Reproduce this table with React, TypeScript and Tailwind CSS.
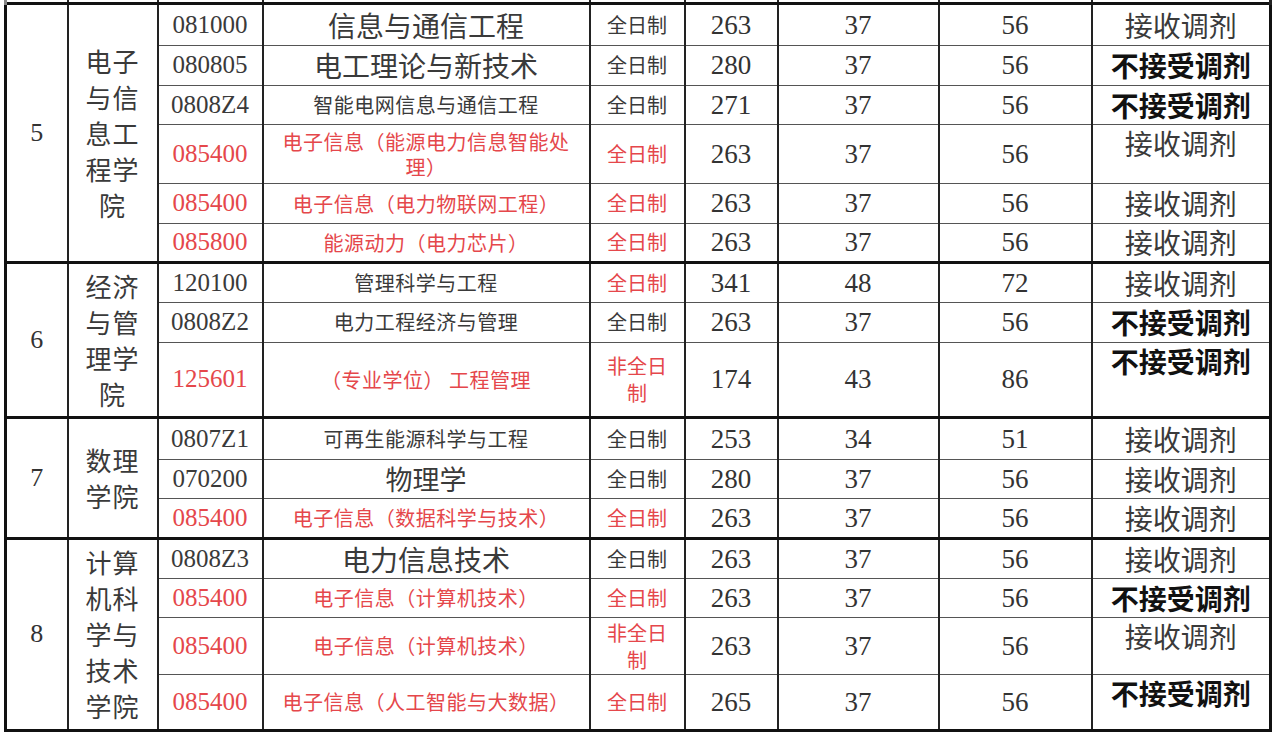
import React from "react";

type Row = {
  h: string;
  code: string;
  codeRed?: boolean;
  name: React.ReactNode;
  nameCls: string;
  type: React.ReactNode;
  typeRed?: boolean;
  typeTall?: boolean;
  statusTop?: boolean;
  score: string;
  a: string;
  b: string;
  ok: boolean;
};

type Section = {
  num: string;
  school: string[];
  rows: Row[];
};

const big = "text-[28px] leading-[30px] text-[#3a3a3a]";
const small = "text-[20px] leading-[26px] text-[#3a3a3a] tracking-[0.5px]";
const smallRed = "text-[20px] leading-[25px] text-[#e5474b] tracking-[0.5px]";

const sections: Section[] = [
  {
    num: "5",
    school: ["电子", "与信", "息工", "程学", "院"],
    rows: [
      { h: "h-[42px]", code: "081000", name: "信息与通信工程", nameCls: big, type: "全日制", score: "263", a: "37", b: "56", ok: true },
      { h: "h-[40px]", code: "080805", name: "电工理论与新技术", nameCls: big, type: "全日制", score: "280", a: "37", b: "56", ok: false },
      { h: "h-[39px]", code: "0808Z4", name: "智能电网信息与通信工程", nameCls: small, type: "全日制", score: "271", a: "37", b: "56", ok: false },
      {
        h: "h-[59px]",
        code: "085400",
        codeRed: true,
        name: (
          <>
            电子信息（能源电力信息智能处
            <br />
            理）
          </>
        ),
        nameCls: smallRed,
        type: "全日制",
        typeRed: true,
        statusTop: true,
        score: "263",
        a: "37",
        b: "56",
        ok: true,
      },
      { h: "h-[40px]", code: "085400", codeRed: true, name: "电子信息（电力物联网工程）", nameCls: smallRed, type: "全日制", typeRed: true, score: "263", a: "37", b: "56", ok: true },
      { h: "h-[39px]", code: "085800", codeRed: true, name: "能源动力（电力芯片）", nameCls: smallRed, type: "全日制", typeRed: true, score: "263", a: "37", b: "56", ok: true },
    ],
  },
  {
    num: "6",
    school: ["经济", "与管", "理学", "院"],
    rows: [
      { h: "h-[40px]", code: "120100", name: "管理科学与工程", nameCls: small, type: "全日制", typeRed: true, score: "341", a: "48", b: "72", ok: true },
      { h: "h-[40px]", code: "0808Z2", name: "电力工程经济与管理", nameCls: small, type: "全日制", score: "263", a: "37", b: "56", ok: false },
      {
        h: "h-[75px]",
        code: "125601",
        codeRed: true,
        name: "（专业学位） 工程管理",
        nameCls: smallRed,
        type: (
          <>
            非全日
            <br />
            制
          </>
        ),
        typeRed: true,
        typeTall: true,
        statusTop: true,
        score: "174",
        a: "43",
        b: "86",
        ok: false,
      },
    ],
  },
  {
    num: "7",
    school: ["数理", "学院"],
    rows: [
      { h: "h-[42px]", code: "0807Z1", name: "可再生能源科学与工程", nameCls: small, type: "全日制", score: "253", a: "34", b: "51", ok: true },
      { h: "h-[39px]", code: "070200", name: "物理学", nameCls: "text-[27px] leading-[30px] text-[#3a3a3a]", type: "全日制", score: "280", a: "37", b: "56", ok: true },
      { h: "h-[40px]", code: "085400", codeRed: true, name: "电子信息（数据科学与技术）", nameCls: smallRed, type: "全日制", typeRed: true, score: "263", a: "37", b: "56", ok: true },
    ],
  },
  {
    num: "8",
    school: ["计算", "机科", "学与", "技术", "学院"],
    rows: [
      { h: "h-[40px]", code: "0808Z3", name: "电力信息技术", nameCls: big, type: "全日制", score: "263", a: "37", b: "56", ok: true },
      { h: "h-[39px]", code: "085400", codeRed: true, name: "电子信息（计算机技术）", nameCls: smallRed, type: "全日制", typeRed: true, score: "263", a: "37", b: "56", ok: false },
      {
        h: "h-[57px]",
        code: "085400",
        codeRed: true,
        name: "电子信息（计算机技术）",
        nameCls: smallRed,
        type: (
          <>
            非全日
            <br />
            制
          </>
        ),
        typeRed: true,
        typeTall: true,
        statusTop: true,
        score: "263",
        a: "37",
        b: "56",
        ok: true,
      },
      { h: "h-[56px]", code: "085400", codeRed: true, name: "电子信息（人工智能与大数据）", nameCls: smallRed, type: "全日制", typeRed: true, statusTop: true, score: "265", a: "37", b: "56", ok: false },
    ],
  },
];

const serif = "font-['Liberation_Serif','Times_New_Roman',serif]";
const cjk = "font-['Noto_Sans_CJK_SC','Noto_Sans',sans-serif]";

export default function App() {
  return (
    <div className="w-[1280px] h-[738px] bg-white overflow-hidden">
      <table className="ml-[4px] w-[1268px] table-fixed border-collapse border-[3px] border-t-0 border-[#111]">
        <colgroup>
          <col className="w-[62px]" />
          <col className="w-[90px]" />
          <col className="w-[105px]" />
          <col className="w-[327px]" />
          <col className="w-[95px]" />
          <col className="w-[93px]" />
          <col className="w-[161px]" />
          <col className="w-[153px]" />
          <col className="w-[179px]" />
        </colgroup>
        <tbody>
          <tr className="h-[3px]">
            <td className="p-0 border-l-[3px] border-r border-[#888]" />
            <td className="p-0 border-x-2 border-[#222]" />
            <td className="p-0 border-x-2 border-[#222]" />
            <td className="p-0 border-x-2 border-[#222]" />
            <td className="p-0 border-x-2 border-[#222]" />
            <td className="p-0 border-x-2 border-[#222]" />
            <td className="p-0 border-x-2 border-[#222]" />
            <td className="p-0 border-x-2 border-[#222]" />
            <td className="p-0 border-x-2 border-r-[3px] border-[#222]" />
          </tr>
          {sections.map((s) =>
            s.rows.map((r, i) => {
              const top = i === 0 ? "border-t-[3px] border-t-[#111]" : "border-t border-t-[#555]";
              const cell = `p-0 text-center border-x-2 border-x-[#222] ${top}`;
              return (
                <tr key={s.num + "-" + i} className={r.h}>
                  {i === 0 && (
                    <>
                      <td
                        rowSpan={s.rows.length}
                        className={`p-0 text-center align-middle border-l-[3px] border-l-[#111] border-r border-r-[#888] border-t-[3px] border-t-[#111] ${serif} text-[26px] leading-[28px] text-[#333]`}
                      >
                        {s.num}
                      </td>
                      <td
                        rowSpan={s.rows.length}
                        className={`p-0 text-center align-middle border-x-2 border-x-[#222] border-t-[3px] border-t-[#111] ${cjk} text-[26px] leading-[36px] tracking-[1px] text-[#3a3a3a]`}
                      >
                        {s.school.map((l, k) => (
                          <div key={k}>{l}</div>
                        ))}
                      </td>
                    </>
                  )}
                  <td className={`${cell} align-middle ${serif} text-[25px] leading-[28px] ${r.codeRed ? "text-[#e5474b]" : "text-[#3a3a3a]"}`}>
                    {r.code}
                  </td>
                  <td className={`${cell} align-middle ${cjk}`}>
                    <div className={r.nameCls}>{r.name}</div>
                  </td>
                  <td className={`${cell} align-middle ${cjk} text-[20px] ${r.typeTall ? "leading-[27px]" : "leading-[26px]"} ${r.typeRed ? "text-[#e5474b]" : "text-[#3a3a3a]"}`}>
                    {r.type}
                  </td>
                  <td className={`${cell} align-middle ${serif} text-[27px] leading-[28px] text-[#333]`}>{r.score}</td>
                  <td className={`${cell} align-middle ${serif} text-[27px] leading-[28px] text-[#333]`}>{r.a}</td>
                  <td className={`${cell} align-middle ${serif} text-[27px] leading-[28px] text-[#333]`}>{r.b}</td>
                  <td
                    className={`${cell} border-r-[3px] border-r-[#111] ${
                      r.statusTop ? "align-top pt-[2px]" : "align-middle"
                    } ${cjk} text-[28px] leading-[32px] ${r.ok ? "text-[#3a3a3a] font-normal" : "text-[#111] font-bold"}`}
                  >
                    {r.ok ? "接收调剂" : "不接受调剂"}
                  </td>
                </tr>
              );
            })
          )}
        </tbody>
      </table>
    </div>
  );
}
